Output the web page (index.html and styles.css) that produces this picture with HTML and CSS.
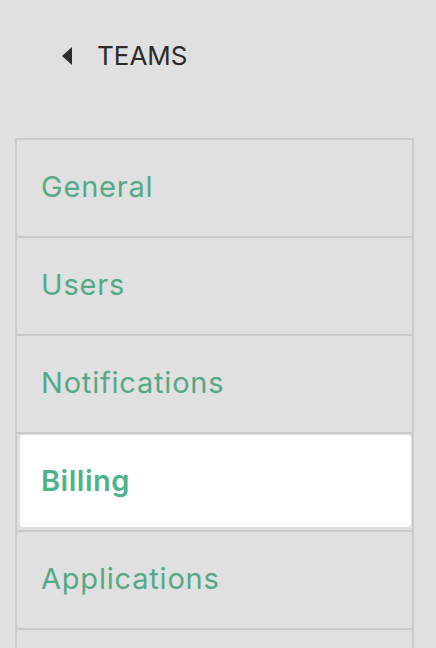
FILE: index.html
```html
<!DOCTYPE html>
<html lang="en">
<head>
<meta charset="utf-8">
<title>Teams settings</title>
<link rel="stylesheet" href="styles.css">
</head>
<body>
<div class="page">
  <a class="back" href="#">
    <svg class="back-icon" width="10" height="18" viewBox="0 0 10 18" aria-hidden="true"><polygon points="10,0 10,18 0,9" fill="#2e2e2e"/></svg>
    <span class="back-label">TEAMS</span>
  </a>
  <nav class="menu">
    <div class="item"><span class="label">General</span></div>
    <div class="item"><span class="label">Users</span></div>
    <div class="item"><span class="label">Notifications</span></div>
    <div class="item item-active"><span class="label">Billing</span></div>
    <div class="item"><span class="label">Applications</span></div>
    <div class="item item-empty"></div>
  </nav>
</div>
</body>
</html>
```
FILE: styles.css
```css
html, body {
  margin: 0;
  padding: 0;
  background: #e0e0e0;
}
body {
  width: 436px;
  height: 648px;
  overflow: hidden;
}
.page {
  padding: 41px 22px 0 15px;
}
.back {
  display: flex;
  align-items: center;
  height: 30px;
  margin-left: 47px;
  text-decoration: none;
  color: #2b2b2b;
}
.back-icon {
  display: block;
  flex: none;
}
.back-label {
  margin-left: 25px;
  font-family: Inter, "Liberation Sans", sans-serif;
  font-size: 26px;
  line-height: 30px;
  color: #2b2b2b;
}
.menu {
  margin-top: 67px;
  border-left: 2px solid #cacaca;
  border-right: 2px solid #cacaca;
}
.item {
  display: flex;
  height: 96px;
  border-top: 2px solid #cacaca;
}
.item-empty {
  height: 18px;
}
.label {
  flex: 1;
  display: flex;
  align-items: center;
  padding: 0 0 4px 24px;
  font-family: Inter, "Open Sans", sans-serif;
  font-size: 29px;
  letter-spacing: 0.8px;
  color: #55a987;
}
.item-active .label {
  margin: 1px 1px 3px 3px;
  padding-left: 21px;
  padding-bottom: 2px;
  background: #ffffff;
  border-radius: 4px;
  font-weight: 600;
  letter-spacing: 0.5px;
  color: #4db38a;
}
```
